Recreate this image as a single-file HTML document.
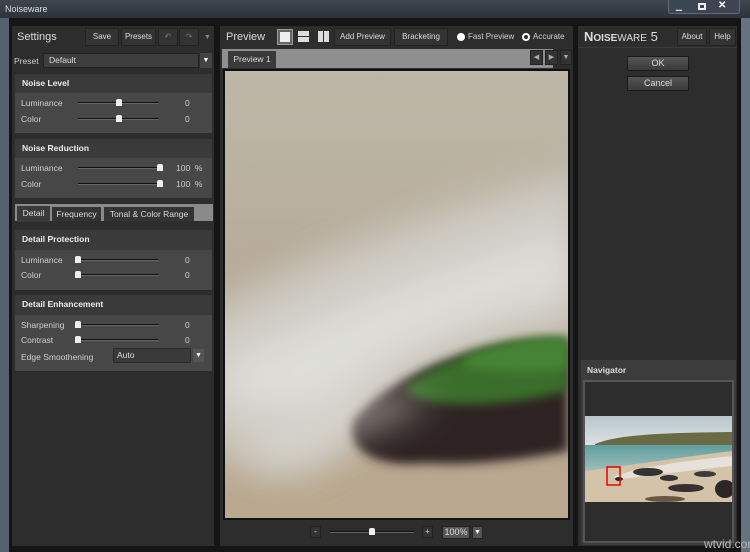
<!DOCTYPE html>
<html><head><style>
*{margin:0;padding:0;box-sizing:border-box}
body{width:750px;height:552px;background:#0c0c0c;font-family:"Liberation Sans",sans-serif;font-size:8.5px;color:#ddd;position:relative;overflow:hidden}
.a{position:absolute}
.title{left:0;top:0;width:750px;height:20px;background:linear-gradient(#3e4650,#2a3038);}
.frame{left:0;top:18px;width:750px;height:534px;background:#151515;border-left:9px solid #55626e;border-right:9px solid #65737e;}
.panel{background:#2d2d2d}
.btn{background:#333;border:1px solid #222;color:#ddd;text-align:center;font-size:8px}
.sech{background:#3a3a3a;color:#eee;font-weight:bold;font-size:8.5px;padding-left:7px;line-height:19px}
.secb{background:#474747}
.lbl{color:#d0d0d0;font-size:8.5px}
.track{height:2px;background:#111;border-bottom:1px solid #666}
.knob{width:6px;height:7px;background:#eee;border-radius:2px 2px 0 0}
</style></head><body>
<div class="a title"></div>
<div class="a" style="left:5px;top:4px;color:#ddd;font-size:9px">Noiseware</div>
<div class="a" style="left:668px;top:0;width:72px;height:14px;background:#3c4652;border:1px solid #667;border-top:none;border-radius:0 0 3px 3px"></div>
<div class="a" style="left:672px;top:2px;width:14px;height:10px;color:#ddd;font-size:8px;text-align:center">▁</div>
<div class="a" style="left:698px;top:3px;width:8px;height:7px;border:2px solid #eee"></div>
<div class="a" style="left:718px;top:0px;color:#fff;font-size:10px;font-weight:bold">✕</div>
<div class="a frame"></div>

<!-- left panel -->
<div class="a panel" style="left:12px;top:26px;width:202px;height:520px"></div>
<div class="a" style="left:17px;top:31px;font-size:11px;color:#ddd">Settings</div>
<div class="a btn" style="left:85px;top:28px;width:34px;height:18px;line-height:16px">Save</div>
<div class="a btn" style="left:121px;top:28px;width:35px;height:18px;line-height:16px">Presets</div>
<div class="a btn" style="left:158px;top:28px;width:20px;height:18px;line-height:16px;color:#777">↶</div>
<div class="a btn" style="left:179px;top:28px;width:20px;height:18px;line-height:16px;color:#777">↷</div>
<div class="a" style="left:204px;top:34px;color:#888;font-size:7px">▼</div>
<div class="a lbl" style="left:14px;top:56px">Preset</div>
<div class="a" style="left:43px;top:53px;width:156px;height:15px;background:#3e3e3e;border:1px solid #222;padding-left:5px;line-height:13px;color:#ddd">Default</div>
<div class="a" style="left:200px;top:53px;width:12px;height:15px;background:#444;color:#fff;font-size:7px;text-align:center;line-height:15px">▼</div>

<div class="a sech" style="left:15px;top:74px;width:197px;height:19px">Noise Level</div>
<div class="a secb" style="left:15px;top:93px;width:197px;height:40px"></div>
<div class="a lbl" style="left:21px;top:98px">Luminance</div>
<div class="a lbl" style="left:21px;top:114px">Color</div>
<div class="a track" style="left:78px;top:102px;width:81px"></div><div class="a knob" style="left:116px;top:99px"></div>
<div class="a track" style="left:78px;top:118px;width:81px"></div><div class="a knob" style="left:116px;top:115px"></div>
<div class="a lbl" style="left:185px;top:98px">0</div><div class="a lbl" style="left:185px;top:114px">0</div>

<div class="a sech" style="left:15px;top:139px;width:197px;height:19px">Noise Reduction</div>
<div class="a secb" style="left:15px;top:158px;width:197px;height:40px"></div>
<div class="a lbl" style="left:21px;top:163px">Luminance</div>
<div class="a lbl" style="left:21px;top:179px">Color</div>
<div class="a track" style="left:78px;top:167px;width:83px"></div><div class="a knob" style="left:157px;top:164px"></div>
<div class="a track" style="left:78px;top:183px;width:83px"></div><div class="a knob" style="left:157px;top:180px"></div>
<div class="a lbl" style="left:176px;top:163px">100 &nbsp;%</div><div class="a lbl" style="left:176px;top:179px">100 &nbsp;%</div>

<div class="a" style="left:15px;top:204px;width:198px;height:17px;background:#8a8a8a"></div>
<div class="a" style="left:17px;top:206px;width:33px;height:16px;background:#3a3a3a;color:#ddd;line-height:15px;text-align:center">Detail</div>
<div class="a" style="left:52px;top:207px;width:49px;height:14px;background:#333;color:#ddd;line-height:14px;text-align:center">Frequency</div>
<div class="a" style="left:104px;top:207px;width:90px;height:14px;background:#333;color:#ddd;line-height:14px;text-align:center">Tonal &amp; Color Range</div>

<div class="a sech" style="left:15px;top:230px;width:197px;height:20px">Detail Protection</div>
<div class="a secb" style="left:15px;top:250px;width:197px;height:40px"></div>
<div class="a lbl" style="left:21px;top:255px">Luminance</div>
<div class="a lbl" style="left:21px;top:270px">Color</div>
<div class="a track" style="left:76px;top:259px;width:83px"></div><div class="a knob" style="left:75px;top:256px"></div>
<div class="a track" style="left:76px;top:274px;width:83px"></div><div class="a knob" style="left:75px;top:271px"></div>
<div class="a lbl" style="left:185px;top:255px">0</div><div class="a lbl" style="left:185px;top:270px">0</div>

<div class="a sech" style="left:15px;top:295px;width:197px;height:20px">Detail Enhancement</div>
<div class="a secb" style="left:15px;top:315px;width:197px;height:56px"></div>
<div class="a lbl" style="left:21px;top:320px">Sharpening</div>
<div class="a lbl" style="left:21px;top:335px">Contrast</div>
<div class="a track" style="left:76px;top:324px;width:83px"></div><div class="a knob" style="left:75px;top:321px"></div>
<div class="a track" style="left:76px;top:339px;width:83px"></div><div class="a knob" style="left:75px;top:336px"></div>
<div class="a lbl" style="left:185px;top:320px">0</div><div class="a lbl" style="left:185px;top:335px">0</div>
<div class="a lbl" style="left:21px;top:352px">Edge Smoothening</div>
<div class="a" style="left:113px;top:348px;width:78px;height:15px;background:#3a3a3a;border:1px solid #2a2a2a;padding-left:3px;line-height:13px">Auto</div>
<div class="a" style="left:193px;top:349px;width:11px;height:13px;background:#555;color:#fff;font-size:7px;text-align:center;line-height:13px">▼</div>

<!-- center -->
<div class="a panel" style="left:220px;top:26px;width:353px;height:520px"></div>
<div class="a" style="left:226px;top:31px;font-size:11px;color:#ddd">Preview</div>
<div class="a" style="left:277px;top:29px;width:16px;height:16px;background:#666;border:1px solid #999"><div style="margin:2px;width:10px;height:10px;background:#eee"></div></div>
<div class="a" style="left:298px;top:31px;width:11px;height:5px;background:#ddd"></div><div class="a" style="left:298px;top:37px;width:11px;height:5px;background:#ddd"></div>
<div class="a" style="left:318px;top:31px;width:5px;height:11px;background:#ddd"></div><div class="a" style="left:324px;top:31px;width:5px;height:11px;background:#ddd"></div>
<div class="a btn" style="left:334px;top:28px;width:57px;height:18px;line-height:16px">Add Preview</div>
<div class="a btn" style="left:394px;top:28px;width:54px;height:18px;line-height:16px">Bracketing</div>
<div class="a" style="left:457px;top:33px;width:8px;height:8px;border-radius:50%;background:#fff"></div>
<div class="a lbl" style="left:468px;top:32px;font-size:8px">Fast Preview</div>
<div class="a" style="left:522px;top:33px;width:8px;height:8px;border-radius:50%;border:2px solid #fff"></div>
<div class="a lbl" style="left:533px;top:32px;font-size:8px">Accurate</div>
<div class="a" style="left:222px;top:49px;width:331px;height:19px;background:#8f8f8f"></div>
<div class="a" style="left:228px;top:51px;width:48px;height:17px;background:#3a3a3a;color:#ddd;line-height:16px;text-align:center">Preview 1</div>
<div class="a btn" style="left:530px;top:50px;width:13px;height:15px;line-height:14px;color:#aaa;font-size:7px">◀</div>
<div class="a btn" style="left:545px;top:50px;width:13px;height:15px;line-height:14px;color:#aaa;font-size:7px">▶</div>
<div class="a btn" style="left:560px;top:50px;width:12px;height:15px;line-height:14px;color:#aaa;font-size:7px">▼</div>
<div class="a" style="left:223px;top:69px;width:347px;height:451px;background:#111"></div>
<svg class="a" style="left:225px;top:71px" width="343" height="447" viewBox="0 0 343 447">
<defs>
<filter id="b" x="-30%" y="-30%" width="160%" height="160%"><feGaussianBlur stdDeviation="18"/></filter>
<filter id="b2" x="-20%" y="-20%" width="140%" height="140%"><feGaussianBlur stdDeviation="5"/></filter>
<linearGradient id="bg" x1="0" y1="0" x2="0" y2="1"><stop offset="0" stop-color="#bdb7a7"/><stop offset=".4" stop-color="#b8ad9c"/><stop offset=".8" stop-color="#b6a690"/><stop offset="1" stop-color="#baa98f"/></linearGradient>
</defs>
<rect width="343" height="447" fill="url(#bg)"/>
<path filter="url(#b)" d="M-30 250 C60 200 160 150 360 100 L360 260 C250 270 180 310 120 380 C80 420 20 400 -30 370Z" fill="#d2d1cb" opacity=".85"/>
<path filter="url(#b)" d="M0 290 C100 245 200 200 343 160 L343 225 C250 240 160 280 110 330 C70 350 30 340 0 330Z" fill="#e2e2de" opacity=".8"/>
<path filter="url(#b2)" d="M128 350 C150 322 200 292 260 278 C300 268 330 270 343 272 L343 380 C300 388 250 395 200 392 C160 396 120 385 128 350Z" fill="#2e2222"/>
<path filter="url(#b2)" d="M180 315 C215 290 260 276 300 270 C325 266 343 268 343 268 L343 320 C300 330 250 338 205 330 C190 326 180 322 180 315Z" fill="#3b6e2c"/>
<path filter="url(#b2)" d="M240 285 C275 272 312 266 343 266 L343 298 C310 302 270 300 240 296Z" fill="#4a8a38" opacity=".8"/>
<path filter="url(#b)" d="M40 400 C110 370 170 350 210 330 L160 320 C100 335 60 360 20 385Z" fill="#dcdcd6" opacity=".6"/>
</svg>
<div class="a btn" style="left:310px;top:526px;width:11px;height:12px;line-height:10px">-</div>
<div class="a track" style="left:330px;top:531px;width:84px"></div><div class="a knob" style="left:369px;top:528px"></div>
<div class="a btn" style="left:422px;top:526px;width:11px;height:12px;line-height:10px">+</div>
<div class="a btn" style="left:442px;top:526px;width:28px;height:13px;line-height:11px;background:#555;font-size:9px">100%</div>
<div class="a btn" style="left:472px;top:526px;width:11px;height:13px;line-height:12px;background:#555;font-size:7px;color:#fff">▼</div>

<!-- right -->
<div class="a panel" style="left:578px;top:26px;width:159px;height:520px"></div>
<div class="a" style="left:578px;top:47px;width:159px;height:1px;background:#3a3a3a"></div>
<div class="a" style="left:584px;top:29px;font-size:13px;color:#ddd;font-weight:bold">N<span style="font-size:10px">OISE</span><span style="font-size:10px;font-weight:normal">WARE</span> <span style="font-weight:normal">5</span></div>
<div class="a btn" style="left:677px;top:28px;width:30px;height:18px;line-height:16px">About</div>
<div class="a btn" style="left:709px;top:28px;width:27px;height:18px;line-height:16px">Help</div>
<div class="a" style="left:627px;top:56px;width:62px;height:15px;background:linear-gradient(#555,#3a3a3a);border:1px solid #1a1a1a;text-align:center;line-height:13px;font-size:9px">OK</div>
<div class="a" style="left:627px;top:76px;width:62px;height:15px;background:linear-gradient(#555,#3a3a3a);border:1px solid #1a1a1a;text-align:center;line-height:13px;font-size:9px">Cancel</div>
<div class="a" style="left:581px;top:360px;width:155px;height:185px;background:#3c3c3c"></div>
<div class="a" style="left:587px;top:365px;font-weight:bold;color:#ddd">Navigator</div>
<div class="a" style="left:583px;top:380px;width:151px;height:163px;background:#555"></div>
<div class="a" style="left:585px;top:382px;width:147px;height:159px;background:#2d2d2d"></div>
<svg class="a" style="left:585px;top:416px" width="147" height="86" viewBox="0 0 147 86">
<defs><linearGradient id="s" x1="0" y1="0" x2="0" y2="1"><stop offset="0" stop-color="#b8c6cc"/><stop offset="1" stop-color="#dde2e2"/></linearGradient>
<linearGradient id="w" x1="0" y1="0" x2="0" y2="1"><stop offset="0" stop-color="#5f9fa0"/><stop offset="1" stop-color="#a9c2bc"/></linearGradient></defs>
<rect width="147" height="30" fill="url(#s)"/>
<path d="M10 28 C30 20 60 17 147 16 L147 30 L10 30Z" fill="#6a6a44"/>
<rect y="29" width="147" height="30" fill="url(#w)"/>
<path d="M0 55 C40 50 90 42 147 35 L147 86 L0 86Z" fill="#d3c3a8"/>
<path d="M30 60 C60 50 100 45 147 40 L147 50 C100 55 60 60 30 64Z" fill="#eee" opacity=".7"/>
<ellipse cx="63" cy="56" rx="15" ry="4" fill="#333"/>
<ellipse cx="84" cy="62" rx="9" ry="3" fill="#333"/>
<ellipse cx="120" cy="58" rx="11" ry="3" fill="#3a3a3a"/>
<ellipse cx="101" cy="72" rx="18" ry="4" fill="#3a3030"/>
<ellipse cx="140" cy="73" rx="10" ry="9" fill="#2e2626"/>
<ellipse cx="80" cy="83" rx="20" ry="3" fill="#6a5540"/>
<ellipse cx="34" cy="63" rx="4" ry="2" fill="#222"/>
<rect x="22" y="51" width="13" height="18" fill="none" stroke="#e00" stroke-width="1.5"/>
</svg>
<div class="a" style="left:704px;top:537px;color:#bbb;font-size:12px">wtvid.com</div>
</body></html>
